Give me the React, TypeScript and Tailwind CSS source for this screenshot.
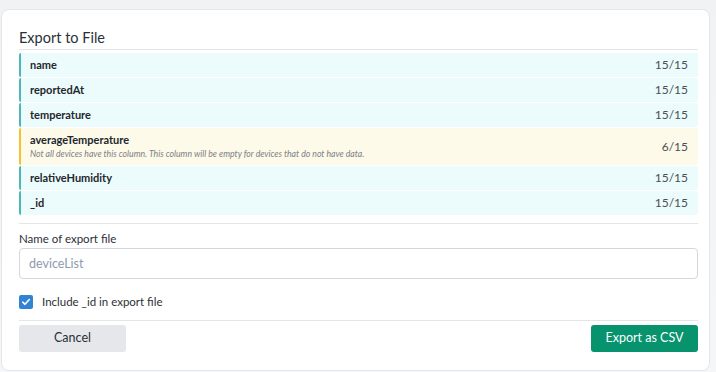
import React, { useState } from 'react';

const columns = [
  { name: 'name', count: '15/15' },
  { name: 'reportedAt', count: '15/15' },
  { name: 'temperature', count: '15/15' },
  {
    name: 'averageTemperature',
    count: '6/15',
    warning: 'Not all devices have this column. This column will be empty for devices that do not have data.',
  },
  { name: 'relativeHumidity', count: '15/15' },
  { name: '_id', count: '15/15' },
];

export default function App() {
  const [includeId, setIncludeId] = useState(true);

  return (
    <div
      className="w-[716px] h-[372px] bg-gradient-to-b from-[#f1f2f4] to-[#f5f6f7] pt-[9px] pl-[1px] pr-[6px] overflow-hidden"
      style={{ fontFamily: 'Lato, "Open Sans", sans-serif' }}
    >
      <div className="bg-white rounded-lg border border-[#e4e6ea] h-[362px] pl-[17px] pr-[11px] pt-[18px]">
        <h2 className="text-[14.5px] leading-[20px] text-[#2b2f36] pb-[1px] border-b border-[#e3e5e8]">
          Export to File
        </h2>

        <div className="flex flex-col gap-[1px] mt-[3px] pb-[8px] border-b border-[#e3e5e8]">
          {columns.map((col) => (
            <div
              key={col.name}
              className={`flex items-center justify-between rounded-[2px] border-l-2 pl-[9px] pr-[10px] ${
                col.warning
                  ? 'bg-[#fefae9] border-[#f2c230] h-[37px]'
                  : 'bg-[#ecfbfb] border-[#4db8b6] h-[24px]'
              }`}
            >
              <div className="flex flex-col">
                <span className="text-[11px] font-bold text-[#23272e] leading-[14px]">{col.name}</span>
                {col.warning && (
                  <span className="text-[8.7px] italic text-[#7c8088] leading-[12px] mt-[1px]">{col.warning}</span>
                )}
              </div>
              <span className="text-[12px] text-[#4a4e55]">{col.count}</span>
            </div>
          ))}
        </div>

        <label className="block text-[11.5px] text-[#2b2f36] mt-[7px] leading-[16px]">Name of export file</label>
        <input
          className="mt-[1px] w-full h-[31px] border border-[#d3d6dc] rounded-[4px] px-[9px] text-[12.5px] text-[#2b2f36] placeholder:text-[#8f9aae] outline-none"
          placeholder="deviceList"
        />

        <label className="flex items-center gap-[9px] mt-[14px] pb-[10px] border-b border-[#e3e5e8]">
          <span
            onClick={() => setIncludeId(!includeId)}
            className="w-[14px] h-[14px] rounded-[2px] bg-[#3183d4] flex items-center justify-center"
          >
            {includeId && (
              <svg width="10" height="10" viewBox="0 0 10 10" fill="none">
                <path d="M1.8 5.2 L4 7.3 L8.3 2.5" stroke="white" strokeWidth="1.6" strokeLinecap="round" strokeLinejoin="round" />
              </svg>
            )}
          </span>
          <span className="text-[11.5px] text-[#2b2f36]">Include _id in export file</span>
        </label>

        <div className="flex justify-between mt-[4px]">
          <button className="w-[107px] h-[27px] rounded-[3px] bg-[#e6e7ea] text-[12.5px] text-[#2b2f36]">Cancel</button>
          <button className="w-[107px] h-[27px] rounded-[3px] bg-[#06936d] text-[12.5px] text-white">Export as CSV</button>
        </div>
      </div>
    </div>
  );
}
